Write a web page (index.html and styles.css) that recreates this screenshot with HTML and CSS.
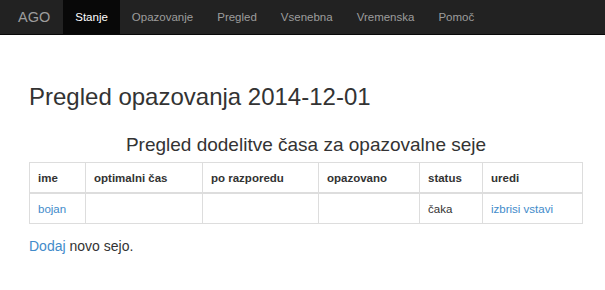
FILE: index.html
```html
<!DOCTYPE html>
<html lang="sl">
<head>
    <meta charset="UTF-8">
    <meta name="viewport" content="width=device-width, initial-scale=1.0">
    <title>AGO - Pregled opazovanja</title>
    <link rel="stylesheet" href="styles.css">
</head>
<body>
    <nav class="navbar">
        <a class="brand" href="#">AGO</a>
        <ul class="nav">
            <li class="active"><a href="#">Stanje</a></li>
            <li><a href="#">Opazovanje</a></li>
            <li><a href="#">Pregled</a></li>
            <li><a href="#">Vsenebna</a></li>
            <li><a href="#">Vremenska</a></li>
            <li><a href="#">Pomoč</a></li>
        </ul>
    </nav>

    <div class="container">
        <h1>Pregled opazovanja 2014-12-01</h1>

        <table class="sessions">
            <caption>Pregled dodelitve časa za opazovalne seje</caption>
            <colgroup>
                <col class="col-name">
                <col class="col-opt">
                <col class="col-plan">
                <col class="col-obs">
                <col class="col-status">
                <col>
            </colgroup>
            <thead>
                <tr>
                    <th>ime</th>
                    <th>optimalni čas</th>
                    <th>po razporedu</th>
                    <th>opazovano</th>
                    <th>status</th>
                    <th>uredi</th>
                </tr>
            </thead>
            <tbody>
                <tr>
                    <td><a href="#">bojan</a></td>
                    <td></td>
                    <td></td>
                    <td></td>
                    <td>čaka</td>
                    <td><a href="#">izbrisi</a> <a href="#">vstavi</a></td>
                </tr>
            </tbody>
        </table>

        <p class="add"><a href="#">Dodaj</a> novo sejo.</p>
    </div>
</body>
</html>
```

FILE: styles.css
```css
body {
    font-family: "Liberation Sans", Arial, sans-serif;
    font-size: 12px;
    color: #333;
    background: #fff;
    margin: 0;
}

a {
    color: #428bca;
    text-decoration: none;
}

.navbar {
    display: flex;
    align-items: stretch;
    height: 34px;
    background-color: #222;
    border-bottom: 1px solid #080808;
    padding-left: 18px;
}

.brand {
    display: flex;
    align-items: center;
    font-size: 14.5px;
    color: #9d9d9d;
    margin-right: 13px;
}

.nav {
    display: flex;
    list-style: none;
    margin: 0;
    padding: 0;
}

.nav li a {
    display: flex;
    align-items: center;
    height: 100%;
    padding: 0 12px;
    color: #9d9d9d;
    font-size: 11.5px;
}

.nav li.active a {
    color: #fff;
    background-color: #080808;
}

.container {
    padding: 0 22px 0 29px;
}

h1 {
    font-size: 24px;
    font-weight: normal;
    margin: 47px 0 0;
    line-height: 30px;
}

.sessions {
    width: 100%;
    table-layout: fixed;
    border-collapse: collapse;
    margin-top: 20px;
}

.sessions caption {
    font-size: 19px;
    padding-bottom: 5px;
    line-height: 25px;
}

.sessions th, .sessions td {
    border: 1px solid #ddd;
    padding: 0 8px;
    text-align: left;
    line-height: 16px;
    font-size: 11.5px;
}

.sessions th {
    height: 29px;
    border-bottom-width: 2px;
}

.sessions td {
    height: 29px;
}

.col-name { width: 56px; }
.col-opt { width: 117px; }
.col-plan { width: 116px; }
.col-obs { width: 101px; }
.col-status { width: 63px; }

.add {
    margin: 14px 0 0;
    font-size: 14px;
}
```
